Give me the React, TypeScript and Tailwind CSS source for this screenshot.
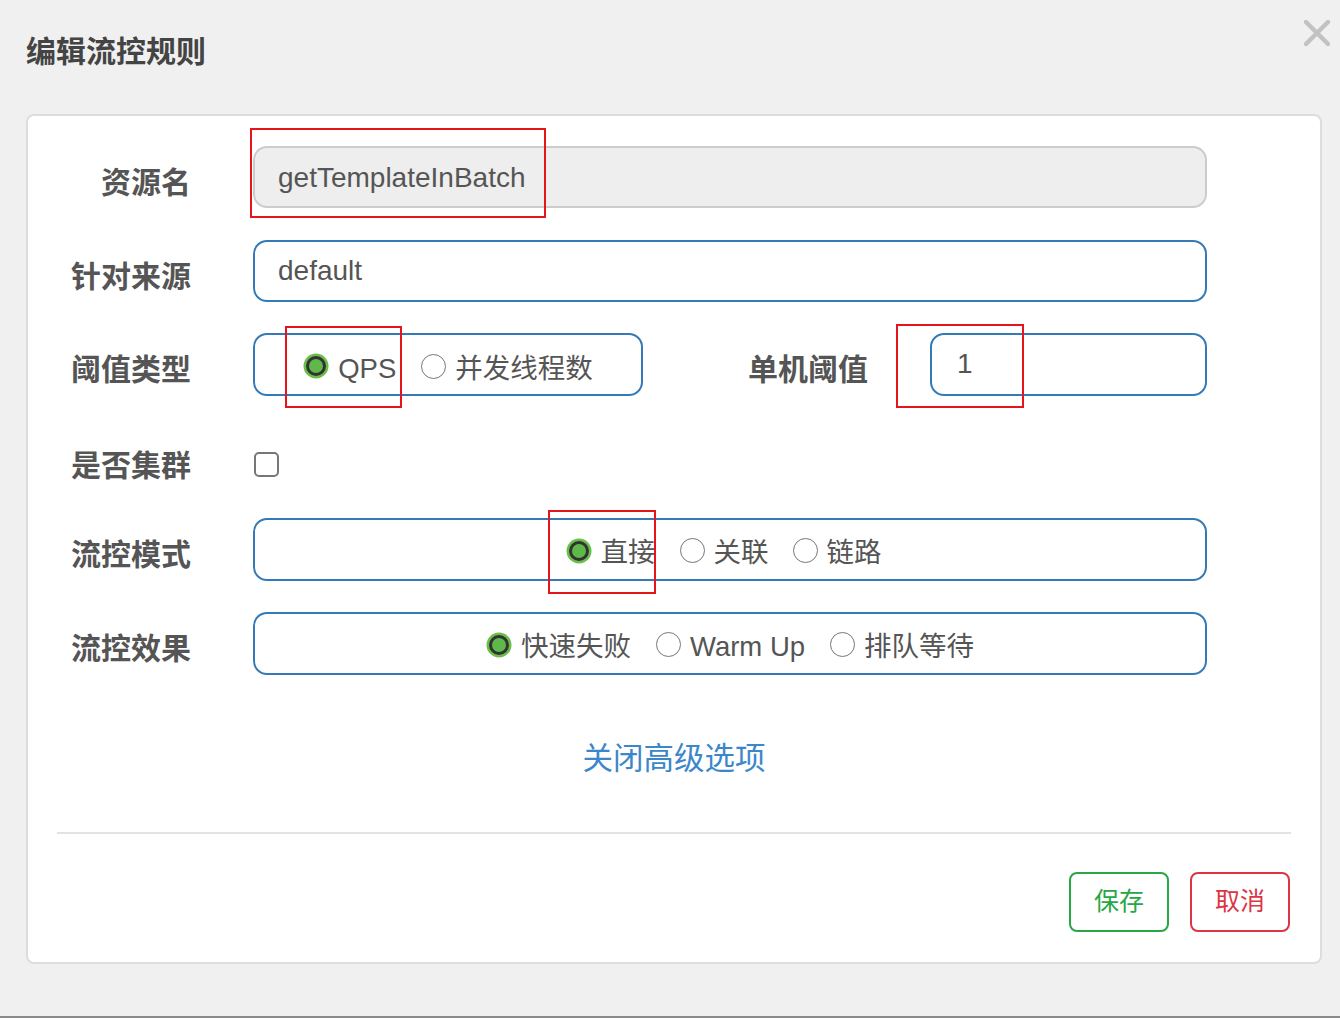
const font = "font-['Liberation_Sans','Noto_Sans_CJK_SC',sans-serif]";

function Radio({ checked, label }: { checked?: boolean; label: string }) {
  return (
    <span className="flex items-center gap-[9px]">
      {checked ? (
        <svg width="26" height="26" viewBox="0 0 26 26" className="shrink-0">
          <circle cx="13" cy="13" r="12.5" fill="#6abf4b" />
          <circle cx="13" cy="13" r="8.5" fill="#5fb84a" stroke="#333" strokeWidth="3" />
        </svg>
      ) : (
        <span className="h-[25px] w-[25px] shrink-0 rounded-full border-[1.5px] border-[#777] bg-white" />
      )}
      <span className="pt-[5px]">{label}</span>
    </span>
  );
}

function Label({ children, pad = "pt-[10px]" }: { children: React.ReactNode; pad?: string }) {
  return (
    <div className={`w-[163px] shrink-0 ${pad} text-right text-[30px] font-bold text-[#555]`}>
      {children}
    </div>
  );
}

export default function App() {
  return (
    <div className={`relative h-[1018px] w-[1340px] border-b-2 border-[#8a8a8a] bg-[#f0f0f0] ${font}`}>
      <div className="flex h-[114px] items-start justify-between pl-[26px] pr-[10px]">
        <h1 className="mt-[29px] text-[30px] font-bold text-[#444]">编辑流控规则</h1>
        <svg width="26" height="26" viewBox="0 0 26 26" className="mt-[20px]">
          <path d="M2 2 L24 24 M24 2 L2 24" stroke="#c2c2c2" strokeWidth="4.5" strokeLinecap="round" />
        </svg>
      </div>

      <div className="ml-[26px] mr-[18px] rounded-[8px] border-2 border-[#ddd] bg-white pb-[30px] pt-[30px]">
        <div className="flex flex-col pr-[113px] text-[27.5px] text-[#555]">
          <div className="flex h-[62px] items-center">
            <Label>资源名</Label>
            <div className="ml-[62px] flex h-[62px] flex-1 items-center rounded-[14px] border-2 border-[#ccc] bg-[#eee] px-[23px] pt-[1px] text-[28px]">
              getTemplateInBatch
            </div>
          </div>

          <div className="mt-[32px] flex h-[62px] items-center">
            <Label>针对来源</Label>
            <div className="ml-[62px] flex h-[62px] flex-1 items-center rounded-[14px] border-2 border-[#337ab7] px-[23px] text-[28px]">
              default
            </div>
          </div>

          <div className="mt-[31px] flex h-[63px] items-center">
            <Label>阈值类型</Label>
            <div className="ml-[62px] flex h-[63px] w-[390px] items-center justify-center gap-[25px] rounded-[14px] border-2 border-[#337ab7] pt-[3px]">
              <Radio checked label="QPS" />
              <Radio label="并发线程数" />
            </div>
            <div className="ml-[105px] w-[120px] pt-[10px] text-[30px] font-bold">单机阈值</div>
            <div className="ml-[62px] flex h-[63px] flex-1 items-center rounded-[14px] border-2 border-[#337ab7] px-[25px] pb-[1px] text-[28px]">
              1
            </div>
          </div>

          <div className="mt-[37px] flex h-[62px] items-center">
            <Label pad="pt-[2px]">是否集群</Label>
            <span className="ml-[63px] h-[25px] w-[25px] rounded-[5px] border-2 border-[#777] bg-white" />
          </div>

          <div className="mt-[23px] flex h-[63px] items-center">
            <Label>流控模式</Label>
            <div className="ml-[62px] flex h-[63px] flex-1 items-center justify-center gap-[24px] rounded-[14px] border-2 border-[#337ab7] pr-[13px] pt-[2px]">
              <Radio checked label="直接" />
              <Radio label="关联" />
              <Radio label="链路" />
            </div>
          </div>

          <div className="mt-[31px] flex h-[63px] items-center">
            <Label>流控效果</Label>
            <div className="ml-[62px] flex h-[63px] flex-1 items-center justify-center gap-[25px] rounded-[14px] border-2 border-[#337ab7] pt-[2px]">
              <Radio checked label="快速失败" />
              <Radio label="Warm Up" />
              <Radio label="排队等待" />
            </div>
          </div>
        </div>

        <div className="mt-[61px] flex justify-center">
          <a className="text-[30.5px] text-[#3b87c9]">关闭高级选项</a>
        </div>

        <div className="mx-[29px] mt-[50px] border-t-2 border-[#e3e3e3]" />

        <div className="mr-[30px] mt-[38px] flex justify-end gap-[21px]">
          <button className="flex h-[60px] w-[100px] items-center justify-center rounded-[8px] border-2 border-[#28a745] text-[25px] text-[#28a745]">
            保存
          </button>
          <button className="flex h-[60px] w-[100px] items-center justify-center rounded-[8px] border-2 border-[#dc3545] text-[25px] text-[#dc3545]">
            取消
          </button>
        </div>
      </div>

      <div className="pointer-events-none absolute left-[250px] top-[128px] h-[90px] w-[296px] border-2 border-[#e8141b]" />
      <div className="pointer-events-none absolute left-[285px] top-[326px] h-[82px] w-[117px] border-2 border-[#e8141b]" />
      <div className="pointer-events-none absolute left-[896px] top-[324px] h-[84px] w-[128px] border-2 border-[#e8141b]" />
      <div className="pointer-events-none absolute left-[548px] top-[510px] h-[84px] w-[108px] border-2 border-[#e8141b]" />
    </div>
  );
}
